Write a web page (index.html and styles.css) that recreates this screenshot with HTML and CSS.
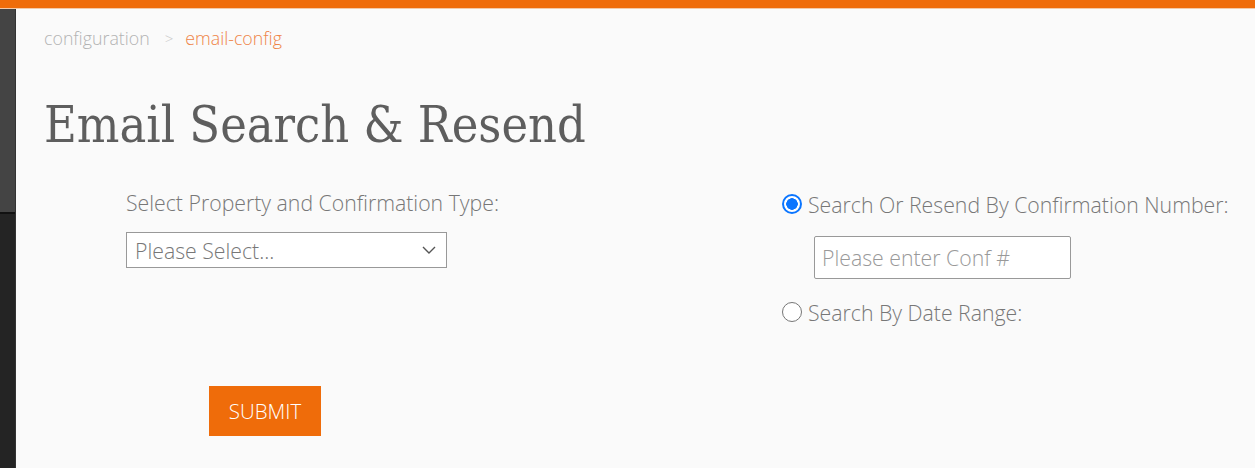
FILE: index.html
```html
<!DOCTYPE html>
<html>
<head>
<meta charset="utf-8">
<link rel="stylesheet" href="styles.css">
</head>
<body>
<div class="topbar"></div>
<div class="layout">
  <aside class="sidebar">
    <div class="side-top"></div>
    <div class="side-bottom"></div>
  </aside>
  <main class="main">
    <nav class="crumbs">
      <span class="crumb">configuration</span>
      <span class="sep">&gt;</span>
      <span class="crumb current">email-config</span>
    </nav>
    <h1 class="title">Email Search &amp; Resend</h1>
    <div class="form">
      <div class="col-left">
        <label class="label">Select Property and Confirmation Type:</label>
        <div class="select">
          <span>Please Select...</span>
          <svg class="chev" width="14" height="8" viewBox="0 0 14 8"><path d="M1 1 L7 7 L13 1" fill="none" stroke="#555" stroke-width="1.4"/></svg>
        </div>
        <button class="submit">SUBMIT</button>
      </div>
      <div class="col-right">
        <div class="radio-row">
          <span class="radio checked"></span>
          <span class="radio-label">Search Or Resend By Confirmation Number:</span>
        </div>
        <div class="conf-input">Please enter Conf #</div>
        <div class="radio-row second">
          <span class="radio"></span>
          <span class="radio-label">Search By Date Range:</span>
        </div>
      </div>
    </div>
  </main>
</div>
</body>
</html>
```
FILE: styles.css
```css
* { box-sizing: border-box; }
html, body { margin: 0; padding: 0; }
body {
  background: #fafafa;
  font-family: "Open Sans", "Liberation Sans", sans-serif;
  font-weight: 300;
  color: #777;
  height: 468px;
  overflow: hidden;
}
.topbar {
  height: 9px;
  background: #ef6c0a;
  border-bottom: 1px solid #f3c9a8;
}
.layout {
  display: flex;
  height: 459px;
}
.sidebar {
  width: 16px;
  display: flex;
  flex-direction: column;
  border-right: 1px solid #333;
}
.side-top {
  height: 205px;
  background: #444;
  border-bottom: 2px solid #111;
}
.side-bottom {
  flex: 1;
  background: #242424;
}
.main {
  flex: 1;
  padding-left: 28px;
}
.crumbs {
  font-size: 17.8px;
  margin-top: 17px;
  height: 24px;
  display: flex;
  align-items: center;
}
.crumb { color: #b3b3b3; }
.crumb.current { color: #ef8447; }
.sep {
  color: #c8c8c8;
  font-size: 15px;
  margin: 0 12px 0 15px;
}
.title {
  font-family: "DejaVu Serif Condensed", "DejaVu Serif", serif;
  font-stretch: condensed;
  font-weight: normal;
  font-size: 50px;
  color: #5e5e5e;
  margin: 45px 0 0 0;
  line-height: 60px;
}
.form {
  display: flex;
  padding-left: 82px;
  margin-top: 33px;
}
.col-left {
  width: 656px;
  display: flex;
  flex-direction: column;
  align-items: flex-start;
}
.label {
  font-size: 21.25px;
  line-height: 29px;
  color: #777;
}
.select {
  margin-top: 15px;
  width: 321px;
  height: 36px;
  border: 1px solid #999;
  background: #fff;
  display: flex;
  align-items: center;
  justify-content: space-between;
  padding: 0 8px 0 8px;
  font-size: 21.25px;
  color: #777;
}
.chev { margin-right: 2px; }
.submit {
  margin-top: 118px;
  margin-left: 83px;
  width: 112px;
  height: 50px;
  background: #ef6c0a;
  color: #fff;
  border: none;
  font-family: "Open Sans", "Liberation Sans", sans-serif;
  font-weight: 300;
  font-size: 20.5px;
  padding: 0;
}
.col-right {
  display: flex;
  flex-direction: column;
  padding-top: 2px;
}
.radio-row {
  display: flex;
  align-items: center;
  gap: 6px;
  height: 28px;
}
.radio {
  width: 20px;
  height: 20px;
  border: 1px solid #767676;
  border-radius: 50%;
  background: #fff;
  display: inline-block;
}
.radio.checked {
  border: 2px solid #0a75ff;
  background: radial-gradient(circle, #0a75ff 0 5.5px, #fff 6px);
}
.radio-label {
  font-size: 21.25px;
  color: #777;
}
.conf-input {
  margin: 18px 0 0 32px;
  width: 257px;
  height: 43px;
  border: 1px solid #999;
  border-radius: 2px;
  background: #fff;
  display: flex;
  align-items: center;
  padding-left: 7px;
  font-size: 21.25px;
  color: #999;
}
.radio-row.second {
  margin-top: 19px;
}
```
